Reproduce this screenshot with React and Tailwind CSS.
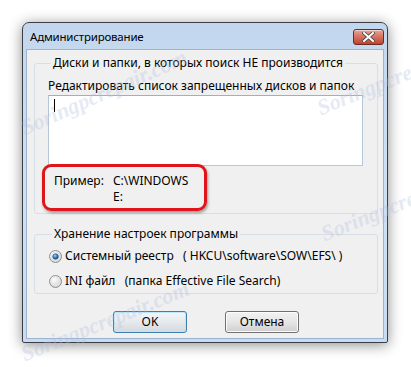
import React from "react";

const font = { fontFamily: '"Noto Sans", "Open Sans", sans-serif' };

function Radio({ checked }) {
  return (
    <svg width="13" height="13" viewBox="0 0 13 13" className="shrink-0">
      <defs>
        <radialGradient id={checked ? "rg1" : "rg0"} cx="0.35" cy="0.3" r="0.8">
          <stop offset="0" stopColor="#ffffff" />
          <stop offset="1" stopColor="#cfcfcf" />
        </radialGradient>
        <radialGradient id="dot" cx="0.4" cy="0.35" r="0.7">
          <stop offset="0" stopColor="#9fd3f5" />
          <stop offset="0.6" stopColor="#2c75b8" />
          <stop offset="1" stopColor="#164a85" />
        </radialGradient>
      </defs>
      <circle cx="6.5" cy="6.5" r="6" fill={`url(#${checked ? "rg1" : "rg0"})`} stroke="#8e8f8f" strokeWidth="1" />
      <circle cx="6.5" cy="6.5" r="4.2" fill="none" stroke="#e4e4e4" strokeWidth="0.8" />
      {checked && <circle cx="6.5" cy="6.5" r="2.8" fill="url(#dot)" stroke="#1a3f6c" strokeWidth="0.5" />}
    </svg>
  );
}

function Watermark({ className }) {
  return (
    <div
      className={`absolute pointer-events-none select-none italic font-bold text-[22px] text-[#aebde0] opacity-30 origin-left whitespace-nowrap ${className}`}
      style={{ fontFamily: '"Liberation Serif", serif' }}
    >
      Soringpcrepair.com
    </div>
  );
}

export default function App() {
  return (
    <div className="relative w-[411px] h-[367px] bg-white overflow-hidden text-[12px] text-black" style={font}>
      <div className="pt-[22px] pl-[22px]">
        <div className="w-[366px] h-[321px] rounded-t-[7px] rounded-b-[2px] border border-[#3b3f45] bg-gradient-to-b from-[#c2d7ee] via-[#cfe0f3] to-[#c8dcf1] shadow-[0_2px_14px_rgba(0,0,0,0.45)] flex flex-col">
          <div className="h-[25px] flex items-center justify-between pl-[7px] pr-[3px]">
            <span className="text-[11.5px] tracking-[-0.2px] leading-none mt-[2px]">Администрирование</span>
            <div className="w-[31px] h-[16px] mt-[2px] rounded-[3px] border border-[#6b2a22] bg-gradient-to-b from-[#e8a597] via-[#d4705f] to-[#c0412f] flex items-center justify-center shadow-[inset_0_1px_0_rgba(255,255,255,0.5)]">
              <svg width="13" height="10" viewBox="0 0 13 10">
                <path d="M2 1 L11 9 M11 1 L2 9" stroke="#4a4a4a" strokeWidth="3.6" strokeLinecap="square" />
                <path d="M2 1 L11 9 M11 1 L2 9" stroke="#ffffff" strokeWidth="2" strokeLinecap="square" />
              </svg>
            </div>
          </div>
          <div className="mx-[3px] mb-[3px] mt-[1px] flex-1 border border-[#9db4cf] bg-[#f0f0f0] flex flex-col pl-[7px] pr-[5px]">
            <fieldset className="mt-[5px] border border-[#d5dfe5] rounded-[3px] pl-[13px] pr-[14px] pb-[8px] h-[159px]">
              <legend className="ml-[3px] px-[2px] leading-[16px]">Диски и папки, в которых поиск НЕ производится</legend>
              <div className="mt-[7px] leading-[16px]">Редактировать список запрещенных дисков и папок</div>
              <div className="mt-[1px] h-[71px] border border-[#b7c6d8] border-t-[#abadb3] bg-white pl-[5px] pt-[3px]">
                <div className="w-px h-[13px] bg-black" />
              </div>
              <div className="relative mt-[7px] flex pl-[6px] leading-[16px]">
                <span className="w-[59px]">Пример:</span>
                <div className="flex flex-col">
                  <span>C:\WINDOWS</span>
                  <span>E:</span>
                </div>
                <div className="absolute left-[-6px] top-[-9px] w-[165px] h-[47px] rounded-[9px] border-[3px] border-[#e0141b] shadow-[1px_2px_3px_rgba(0,0,0,0.35)]" />
              </div>
            </fieldset>
            <fieldset className="mt-[12px] border border-[#d5dfe5] rounded-[3px] pl-[14px] h-[68px]">
              <legend className="ml-[3px] px-[2px] leading-[16px]">Хранение настроек программы</legend>
              <div className="mt-[6px] flex items-center gap-[3px] leading-[16px]">
                <Radio checked />
                <span className="whitespace-pre">Системный реестр   ( HKCU\software\SOW\EFS\ )</span>
              </div>
              <div className="mt-[9px] flex items-center gap-[3px] leading-[16px]">
                <Radio />
                <span className="whitespace-pre">INI файл   (папка Effective File Search)</span>
              </div>
            </fieldset>
            <div className="mt-[17px] flex gap-[38px] pl-[79px]">
              <button className="w-[74px] h-[22px] rounded-[3px] border border-[#3c7fb1] bg-gradient-to-b from-[#f3f6f8] via-[#e6eaed] to-[#d3d9de] shadow-[inset_0_0_0_1px_#bfe6f8] text-[12px]">OK</button>
              <button className="w-[74px] h-[22px] rounded-[3px] border border-[#707070] bg-gradient-to-b from-[#f2f2f2] via-[#e6e6e6] to-[#cfcfcf] shadow-[inset_0_0_0_1px_#fcfcfc] text-[12px]">Отмена</button>
            </div>
          </div>
        </div>
      </div>
      <Watermark className="left-[22px] top-[112px] rotate-[-24deg]" />
      <Watermark className="left-[318px] top-[92px] rotate-[-22deg]" />
      <Watermark className="left-[322px] top-[218px] rotate-[-22deg]" />
      <Watermark className="left-[22px] top-[338px] rotate-[-22deg]" />
    </div>
  );
}
